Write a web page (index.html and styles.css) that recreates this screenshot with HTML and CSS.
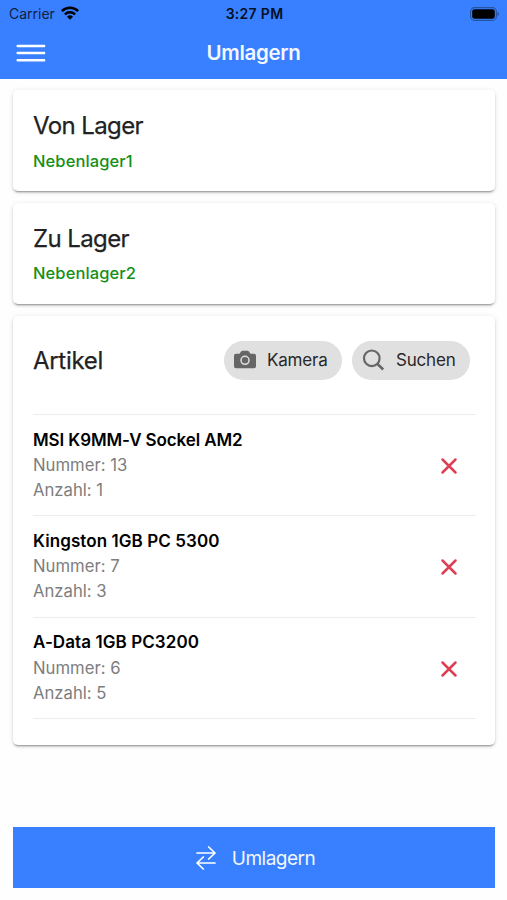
FILE: index.html
```html
<!DOCTYPE html>
<html lang="de">
<head>
<meta charset="utf-8">
<title>Umlagern</title>
<link rel="stylesheet" href="styles.css">
</head>
<body>
<header class="header">
  <div class="status">
    <div class="carrier"><span class="carrier-name">Carrier</span>
      <svg class="wifi" width="18" height="14" viewBox="0 0 18 14"><g fill="none" stroke="#000" stroke-width="2.5"><path d="M.9 5.1a11.5 11.5 0 0 1 16.2 0"/><path d="M3.9 8.4a7.3 7.3 0 0 1 10.2 0"/></g><path d="M9 13.7 6 10.8a4.3 4.3 0 0 1 6 0z"/></svg>
    </div>
    <span class="clock">3:27 PM</span>
    <svg class="battery" width="30" height="14" viewBox="0 0 30 14"><rect x=".6" y=".6" width="25.8" height="12.8" rx="4" fill="none" stroke="#24539f" stroke-width="1.1"/><rect x="2.2" y="2.2" width="22.6" height="9.6" rx="2.4"/><path d="M27.5 4.8v4.4q1.5-.7 1.5-2.2t-1.5-2.2z" fill="#24539f"/></svg>
  </div>
  <div class="toolbar">
    <svg class="menu" width="30" height="20" viewBox="0 0 30 20"><path d="M1.7 3h26.400M1.700 10h26.400M1.700 17.200h26.400" stroke="#fff" stroke-width="2.500" stroke-linecap="round"/></svg>
    <h1 class="page-title">Umlagern</h1>
    <span></span>
  </div>
</header>
<main class="content">
  <section class="card">
    <h2 class="card-title">Von Lager</h2>
    <p class="place from">Nebenlager1</p>
  </section>
  <section class="card">
    <h2 class="card-title">Zu Lager</h2>
    <p class="place">Nebenlager2</p>
  </section>
  <section class="card articles">
    <div class="articles-head">
      <h2 class="card-title articles-title">Artikel</h2>
      <div class="chips">
        <button class="chip"><svg class="chip-icon" width="24" height="24" viewBox="0 0 24 24"><path d="M3 5.700h3.500l1.600-2.100q.6-.8 1.500-.8h4.800q.9 0 1.500.8l1.600 2.100H21q2 0 2 2v10.500q0 2-2 2H3q-2 0-2-2V7.700q0-2 2-2z" fill="#666"/><circle cx="12" cy="12.300" r="4" fill="#666" stroke="#e0e0e0" stroke-width="1.500"/></svg><span class="chip-label">Kamera</span></button>
        <button class="chip search"><svg class="chip-icon" width="24" height="24" viewBox="0 0 24 24"><g fill="none" stroke="#666" stroke-width="2.200"><circle cx="10.800" cy="10.300" r="7.800"/><path d="m16.500 16 5.700 5.500" stroke-width="2.500"/></g></svg><span class="chip-label">Suchen</span></button>
      </div>
    </div>
    <ul class="items">
      <li class="item">
        <div><h3 class="item-name long">MSI K9MM-V Sockel AM2</h3><p class="detail">Nummer: 13</p><p class="detail">Anzahl: 1</p></div>
        <svg class="remove" width="18" height="18" viewBox="0 0 18 18"><path d="m2.500 2.500 13 13m0-13-13 13"/></svg>
      </li>
      <li class="item">
        <div><h3 class="item-name">Kingston 1GB PC 5300</h3><p class="detail">Nummer: 7</p><p class="detail">Anzahl: 3</p></div>
        <svg class="remove" width="18" height="18" viewBox="0 0 18 18"><path d="m2.500 2.500 13 13m0-13-13 13"/></svg>
      </li>
      <li class="item">
        <div><h3 class="item-name">A-Data 1GB PC3200</h3><p class="detail">Nummer: 6</p><p class="detail">Anzahl: 5</p></div>
        <svg class="remove" width="18" height="18" viewBox="0 0 18 18"><path d="m2.500 2.500 13 13m0-13-13 13"/></svg>
      </li>
    </ul>
  </section>
</main>
<button class="submit">
  <svg class="swap" width="20" height="26" viewBox="0 0 20 26"><path d="M1 8h18M12.700 2l6.300 6-6.300 6M19 18H1M7.300 12 1 18l6.300 6" fill="none" stroke="#fff" stroke-width="1.700" stroke-linecap="round" stroke-linejoin="round"/></svg>
  <span>Umlagern</span>
</button>
</body>
</html>
```
FILE: styles.css
```css
* { box-sizing: border-box; margin: 0; padding: 0; }
body {
  height: 900px;
  display: flex;
  flex-direction: column;
  background: #fefefe;
  font-family: Inter, "Liberation Sans", sans-serif;
  color: #222;
}
button { border: 0; font-family: inherit; }
svg { display: block; flex: none; }
.header { height: 79px; background: #3880ff; }
.status {
  height: 27px;
  padding: 0 7px 0 9px;
  display: grid;
  grid-template-columns: 1fr auto 1fr;
  align-items: center;
}
.carrier { display: flex; align-items: center; gap: 6px; color: #10213f; font-size: 14px; }
.carrier-name { letter-spacing: 0; }
.wifi { margin-top: -2px; }
.clock { color: #061024; font-size: 14px; font-weight: 600; letter-spacing: .3px; }
.battery { justify-self: end; }
.toolbar {
  height: 51px;
  padding: 0 16px;
  display: grid;
  grid-template-columns: 1fr auto 1fr;
  align-items: center;
}
.page-title { color: #f3f7ff; font-size: 20.5px; font-weight: 600; letter-spacing: -.3px; }
.content {
  padding: 11px 12px 0 13px;
  display: flex;
  flex-direction: column;
  gap: 12px;
}
.card {
  height: 101px;
  padding: 21px 19px 0 20px;
  border-radius: 5px;
  background: #fff;
  box-shadow: 0 3px 1px -2px rgba(0,0,0,.2), 0 2px 2px rgba(0,0,0,.14), 0 1px 5px rgba(0,0,0,.12);
}
.card-title { font-size: 24px; line-height: 30px; font-weight: 400; letter-spacing: -.6px; -webkit-text-stroke: .25px #222; }
.articles-title { letter-spacing: -.3px; }
.place { margin-top: 8px; font-size: 16.5px; line-height: 22px; font-weight: 500; letter-spacing: .1px; color: #149018; }
.from { margin-top: 9px; }
.articles { height: 429px; padding-top: 25px; }
.articles-head { display: flex; align-items: center; justify-content: space-between; padding-right: 6px; }
.chips { display: flex; gap: 10px; }
.chip {
  width: 118px;
  height: 39px;
  padding: 0 0 1px 9px;
  display: flex;
  align-items: center;
  gap: 10px;
  border-radius: 20px;
  background: #e0e0e0;
  color: #282828;
  font-size: 17px;
  letter-spacing: -.2px;
}
.search { gap: 11px; }
.items { margin-top: 34px; list-style: none; border-top: 1px solid #ececec; }
.item {
  height: 101.4px;
  padding: 12.6px 18px 0 0;
  display: flex;
  justify-content: space-between;
  border-bottom: 1px solid #ececec;
}
.item-name { color: #000; font-size: 17px; line-height: 25.6px; font-weight: 600; letter-spacing: .08px; }
.long { letter-spacing: -.1px; }
.detail { margin-top: -.3px; color: #7d7d7d; font-size: 16.7px; line-height: 25.5px; }
.remove { margin-top: 29.4px; fill: none; stroke: #df3f55; stroke-width: 2.5; stroke-linecap: round; }
.submit {
  height: 61px;
  margin: auto 12px 12px 13px;
  padding: 1px 0 0 3px;
  display: flex;
  align-items: center;
  justify-content: center;
  gap: 16px;
  background: #3880ff;
  color: #f3f7ff;
  font-size: 19px;
  letter-spacing: -.5px;
}
```
